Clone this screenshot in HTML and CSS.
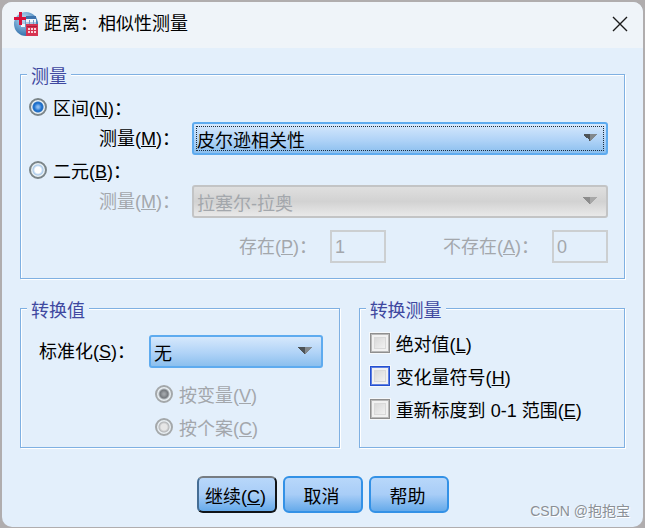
FILE: index.html
```html
<!DOCTYPE html>
<html lang="zh-CN">
<head>
  <meta charset="UTF-8">
  <meta name="viewport" content="width=device-width, initial-scale=1.0">
  <title>距离：相似性测量</title>
  <link rel="stylesheet" href="styles.css">
</head>
<body>
  <div class="dialog">
    <header class="titlebar">
      <svg class="logo" viewBox="0 0 24 24" aria-hidden="true">
        <defs>
          <radialGradient id="globe" cx="40%" cy="30%" r="75%">
            <stop offset="0" stop-color="#c3ddf1"/>
            <stop offset="0.5" stop-color="#6fa3d0"/>
            <stop offset="1" stop-color="#2b69a5"/>
          </radialGradient>
        </defs>
        <circle cx="12" cy="12" r="12" fill="url(#globe)"/>
        <path d="M11 6h11v9H7v-5h4z" fill="#f2f7fc"/>
        <path d="M12 4h10v3H12z" fill="#3d73ad"/>
        <path d="M8 11h14M11.500 8v7M15.500 8v7M19.500 8v7" stroke="#6d9bc8" fill="none"/>
        <path d="M5 0h3v5h4v3H8v5H5V8H0V5h5z" fill="#d8103a"/>
        <path d="M12 12h12v12H12z" fill="#d63351"/>
        <path d="M13 14h10v1H13z" fill="#a81f3c"/>
        <path d="M14 16h2v2h-2zM17 16h2v2h-2zM20 16h2v2h-2zM14 19h2v2h-2zM17 19h2v2h-2zM20 19h2v2h-2z" fill="#f9d5dc"/>
      </svg>
      <h1>距离：相似性测量</h1>
      <button class="close" type="button" aria-label="关闭">
        <svg viewBox="0 0 16 16" aria-hidden="true"><path d="M1 1l14 14M15 1L1 15" fill="none" stroke="#1a1a1a" stroke-width="1.4"/></svg>
      </button>
    </header>

    <form class="content">
      <fieldset class="measure">
        <legend>测量</legend>
        <label class="choice"><input type="radio" name="measure" checked><span>区间(<u>N</u>)：</span></label>
        <div class="row">
          <label for="interval">测量(<u>M</u>)：</label>
          <select id="interval" class="focused"><option>皮尔逊相关性</option></select>
        </div>
        <label class="choice"><input type="radio" name="measure"><span>二元(<u>B</u>)：</span></label>
        <div class="row disabled">
          <label for="binary">测量(<u>M</u>)：</label>
          <select id="binary" disabled><option>拉塞尔-拉奥</option></select>
        </div>
        <div class="values disabled">
          <label for="present">存在(<u>P</u>)：</label>
          <input id="present" type="text" value="1" disabled>
          <label for="absent">不存在(<u>A</u>)：</label>
          <input id="absent" type="text" value="0" disabled>
        </div>
      </fieldset>

      <div class="columns">
        <fieldset class="transform">
          <legend>转换值</legend>
          <div class="row">
            <label for="standardize">标准化(<u>S</u>)：</label>
            <select id="standardize"><option>无</option></select>
          </div>
          <div class="by disabled">
            <label class="choice"><input type="radio" name="by" checked disabled><span>按变量(<u>V</u>)</span></label>
            <label class="choice"><input type="radio" name="by" disabled><span>按个案(<u>C</u>)</span></label>
          </div>
        </fieldset>

        <fieldset class="checks">
          <legend>转换测量</legend>
          <label class="choice"><input type="checkbox"><span>绝对值(<u>L</u>)</span></label>
          <label class="choice"><input type="checkbox" class="hot"><span>变化量符号(<u>H</u>)</span></label>
          <label class="choice"><input type="checkbox"><span>重新标度到 0-1 范围(<u>E</u>)</span></label>
        </fieldset>
      </div>

      <div class="buttons">
        <button class="btn default" type="button">继续(<u>C</u>)</button>
        <button class="btn" type="button">取消</button>
        <button class="btn" type="button">帮助</button>
      </div>
    </form>
    <span class="watermark">CSDN @抱抱宝</span>
  </div>
</body>
</html>
```
FILE: styles.css
```css
* {
  box-sizing: border-box;
}
body {
  margin: 0;
  padding: 2px 2px 1px;
  background: #b0adae;
  color: #000;
  font-family: "Liberation Sans", "Noto Sans CJK SC", sans-serif;
  font-size: 18px;
  line-height: 24px;
}
.dialog {
  position: relative;
  min-height: calc(100vh - 3px);
  border-radius: 10px;
  background: #e3effb;
  overflow: hidden;
}

/* title bar */
.titlebar {
  display: flex;
  align-items: center;
  height: 46px;
  padding: 0 15px 2px 12px;
  background: #eff4f9;
}
.logo {
  width: 24px;
  height: 24px;
}
.titlebar h1 {
  flex: 1;
  margin: 0 0 0 6px;
  font-size: 18px;
  font-weight: normal;
}
.close {
  display: flex;
  padding: 0;
  border: 0;
  background: none;
}
.close svg {
  width: 16px;
  height: 16px;
}

/* groups */
.content {
  padding: 16px 18px 14px;
}
fieldset {
  display: grid;
  align-content: start;
  min-width: 0;
  margin: 0;
  border: 1px solid #7fb0e2;
  box-shadow: 1px 1px 0 #fff, inset 1px 1px 0 #fff;
}
legend {
  height: 20px;
  padding: 0 4px;
  background: #e3effb;
  color: #3f48a0;
  line-height: 26px;
}
.measure {
  gap: 3px;
  padding: 11px 16px 15px 6px;
}
.columns {
  display: grid;
  grid-template-columns: 6fr 5fr;
  gap: 19px;
  margin-top: 19px;
}
.transform {
  gap: 14px;
  padding: 17px 16px 8px 6px;
}
.checks {
  gap: 9px;
  padding: 13px 6px 8px;
}
.row {
  display: flex;
  align-items: center;
}
.row label {
  flex: none;
}
.measure .row {
  padding-left: 72px;
}
.measure .row label {
  width: 93px;
}
.transform .row {
  padding-left: 12px;
}
.transform .row label {
  width: 110px;
}
.by {
  display: grid;
  gap: 9px;
  padding-left: 126px;
}
.values {
  display: flex;
  align-items: center;
  justify-content: flex-end;
  gap: 13px;
  margin-top: 9px;
}
.values input + label {
  margin-left: 44px;
}
.disabled {
  color: #a3a7ac;
}

/* controls */
.choice {
  display: flex;
  align-items: center;
  gap: 6px;
  height: 24px;
  padding-left: 2px;
}
.checks .choice {
  padding-left: 4px;
}
.choice span {
  padding-top: 3px;
}
input,
select,
button {
  margin: 0;
  font: inherit;
  color: inherit;
}
input[type="radio"] {
  appearance: none;
  width: 18px;
  height: 18px;
  border: 2px solid #7b8589;
  border-radius: 50%;
  background: radial-gradient(circle, #fff 3px, #a9c9ea 5px, #e8f0f4 6px);
}
input[type="radio"]:checked {
  background: radial-gradient(circle, #8bbcf0 1px, #176ccb 4px, #2b73c4 5px, #e8f0f4 6px);
}
input[type="radio"]:disabled {
  border-color: #a4a8aa;
  background: radial-gradient(circle, #e6e6e6 3px, #b5b7b9 5px, #e8eef2 6px);
}
input[type="radio"]:disabled:checked {
  background: radial-gradient(circle, #a0a4a8 1px, #74787d 4px, #e8eef2 6px);
}
input[type="checkbox"] {
  appearance: none;
  width: 20px;
  height: 20px;
  border: 1px solid #8f8f8f;
  outline: 1px solid #f5f8fb;
  background: linear-gradient(135deg, #cfcfcf, #fbfbfb);
  box-shadow: inset 0 0 0 1px #b9b9b9, inset 0 0 0 3px #f1f1f1, inset 0 0 0 4px #d9d9d9;
}
input[type="checkbox"].hot {
  border-color: #2450d0;
  box-shadow: inset 0 0 0 1px #5f7fe0, inset 0 0 0 3px #f1f1f1, inset 0 0 0 4px #d9d9d9;
}
input[type="text"] {
  width: 56px;
  height: 33px;
  padding: 2px 3px 0;
  border: 2px solid #cccfd1;
  background: #e3effb;
}
select {
  appearance: none;
  flex: 1;
  min-width: 0;
  height: 33px;
  padding: 5px 36px 0 3px;
  border: 2px solid #5eabef;
  border-radius: 3px;
  background:
    conic-gradient(from -45deg at 50% 100%, #4d5357 0 45deg, #82888d 45deg 90deg, transparent 90deg) right 9px top 10px / 14px 7px no-repeat,
    linear-gradient(#d6e8fc, #b0d3f7 55%, #8bbfee);
  outline: 0;
}
select:disabled {
  border: 2px solid #c3c4c5;
  background:
    conic-gradient(from -45deg at 50% 100%, #8c8c8c 0 45deg, #a8a8a8 45deg 90deg, transparent 90deg) right 9px top 10px / 14px 7px no-repeat,
    linear-gradient(#dfdfdf, #d2d2d2 50%, #e9e9e9);
  opacity: 1;
}
.focused {
  outline: 1px dotted #1c2c3c;
  outline-offset: -5px;
}

/* buttons */
.buttons {
  display: flex;
  justify-content: center;
  gap: 6px;
  margin-top: 28px;
}
.btn {
  width: 80px;
  height: 37px;
  padding: 4px 2px 0 0;
  border: 2px solid #3391e6;
  border-radius: 6px;
  background: linear-gradient(#b8d7fa, #a8cdf7 50%, #65aaea);
}
.btn.default {
  border-color: #777c82 #101418 #101418 #456d94;
}
.watermark {
  position: absolute;
  right: 13px;
  bottom: 4px;
  color: #8b9096;
  font-size: 14px;
  text-shadow: 1px 1px 0 #fff;
}
```
